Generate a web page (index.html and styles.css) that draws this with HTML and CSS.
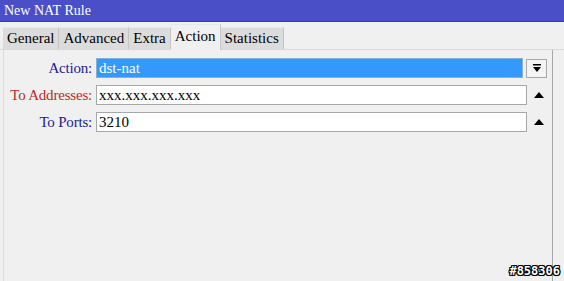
FILE: index.html
```html
<!DOCTYPE html>
<html lang="en">
<head>
<meta charset="UTF-8">
<title>New NAT Rule</title>
<link rel="stylesheet" href="styles.css">
</head>
<body>

<div class="window">
    <div class="titlebar">New NAT Rule</div>

    <!-- tabs -->
    <div class="tabs">
        <div class="tab">General</div>
        <div class="tab">Advanced</div>
        <div class="tab">Extra</div>
        <div class="tab active">Action</div>
        <div class="tab">Statistics</div>
    </div>

    <div class="panel">
        <div class="row">
            <label class="label">Action:</label>
            <div class="field selected">dst-nat</div>
            <div class="dropbtn">
                <svg width="8" height="9" viewBox="0 0 8 9"><rect x="0" y="0" width="8" height="1.5" fill="#000"/><polygon points="0,3 8,3 4,8" fill="#000"/></svg>
            </div>
        </div>
        <div class="row">
            <label class="label red">To Addresses:</label>
            <div class="field">xxx.xxx.xxx.xxx</div>
            <div class="arrow"><svg width="10" height="6" viewBox="0 0 10 6"><polygon points="5,0 10,6 0,6" fill="#000"/></svg></div>
        </div>
        <div class="row">
            <label class="label">To Ports:</label>
            <div class="field">3210</div>
            <div class="arrow"><svg width="10" height="6" viewBox="0 0 10 6"><polygon points="5,0 10,6 0,6" fill="#000"/></svg></div>
        </div>
    </div>

    <div class="watermark">#858306</div>
</div>

</body>
</html>
```

FILE: styles.css
```css
body {
    margin: 0;
    padding: 0;
    background: #f0f0f0;
    font-family: "Liberation Serif", "Times New Roman", serif;
    font-size: 15px;
    color: #000;
}
.window {
    position: relative;
    width: 564px;
    height: 281px;
    overflow: hidden;
}
.titlebar {
    height: 21px;
    background: #4a4fc8;
    border-bottom: 1px solid #3a3ea8;
    color: #fff;
    font-size: 14px;
    line-height: 21px;
    padding-left: 4px;
}
.tabs {
    display: flex;
    align-items: flex-end;
    height: 27px;
    padding-left: 3px;
    border-bottom: 1px solid #d8d8d8;
    background: #f0f0f0;
}
.tab {
    height: 21px;
    line-height: 21px;
    padding: 0 4px;
    background: #dcdcdc;
    border-right: 1px solid #c4c4c4;
    border-top: 1px solid #e8e8e8;
}
.tab.active {
    height: 25px;
    line-height: 22px;
    background: #f0f0f0;
    margin-bottom: -1px;
    border-right: 1px solid #c8c8c8;
}
.panel {
    margin-left: 3px;
    width: 550px;
    height: 232px;
    border-left: 1px solid #dcdcdc;
    border-right: 1px solid #a8a8a8;
    padding-top: 8px;
    box-sizing: border-box;
}
.row {
    display: flex;
    align-items: center;
    height: 20px;
    margin-bottom: 7px;
}
.label {
    width: 88px;
    text-align: right;
    color: #1c1c8c;
    padding-right: 4px;
    letter-spacing: -0.2px;
}
.label.red {
    color: #c02828;
}
.field {
    width: 431px;
    height: 20px;
    line-height: 19px;
    border: 1px solid #a8a8a8;
    background: #fff;
    padding-left: 2px;
    box-sizing: border-box;
}
.field.selected {
    width: 427px;
    background: #3399ff;
    color: #fff;
    border-color: #8ab0d0;
}
.dropbtn {
    width: 19px;
    height: 17px;
    margin-left: 3px;
    border: 1px solid #a8a8a8;
    background: #f4f4f4;
    display: flex;
    justify-content: center;
    align-items: center;
}
.arrow {
    width: 20px;
    display: flex;
    justify-content: center;
    align-items: center;
    padding-left: 2px;
}
.watermark {
    position: absolute;
    right: 4px;
    bottom: 3px;
    font-family: "DejaVu Sans Mono", monospace;
    font-weight: bold;
    font-size: 12px;
    color: #fff;
    text-shadow: -1px 0 #000, 1px 0 #000, 0 -1px #000, 0 1px #000, 1px 1px #000, -1px -1px #000, 1px -1px #000, -1px 1px #000;
}
```
